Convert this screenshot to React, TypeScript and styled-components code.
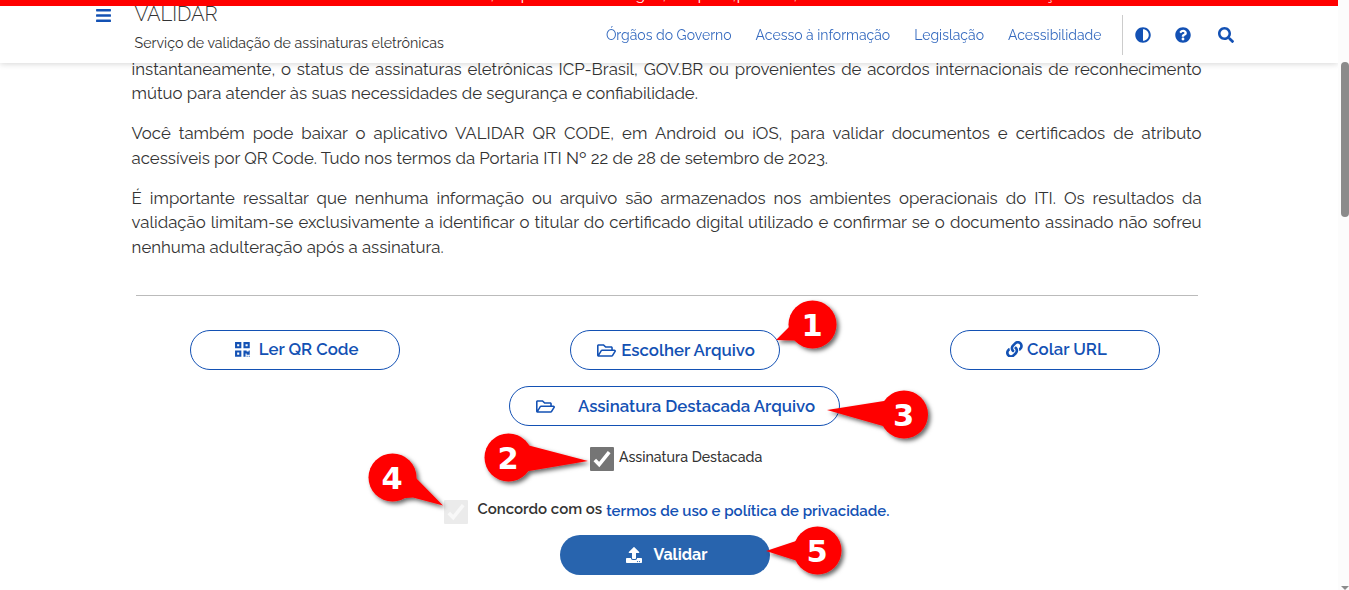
import React from 'react';
import styled, { createGlobalStyle } from 'styled-components';
import {
  FaAdjust,
  FaBars,
  FaLink,
  FaQrcode,
  FaQuestionCircle,
  FaRegFolderOpen,
  FaSearch,
  FaUpload,
} from 'react-icons/fa';

const BLUE = '#1351b4';

const GlobalStyle = createGlobalStyle`
  * { box-sizing: border-box; }
  body {
    margin: 0;
    background: #fff;
    color: #333;
    font-family: Raleway, Lato, sans-serif;
    overflow: hidden;
  }
`;

const Window = styled.div`
  position: relative;
  display: grid;
  grid-template-columns: 1338px 11px;
  width: 1349px;
  height: 590px;
  overflow: hidden;
`;

const Page = styled.div`
  display: flex;
  flex-direction: column;
  height: 590px;
  overflow: hidden;
`;

const Banner = styled.div`
  display: flex;
  height: 6px;
  flex: none;
  overflow: hidden;
  background: #f00;
  color: #fff;
  font-size: 15px;
  line-height: 20px;
  z-index: 2;
`;

const BannerWord = styled.span<{ $slot: number }>`
  width: ${(p) => p.$slot}px;
  flex: none;
  margin-top: -15px;
  text-align: right;
  white-space: nowrap;
`;

const Header = styled.header`
  display: flex;
  flex: none;
  height: 57px;
  padding-left: 94.5px;
  background: #fff;
  box-shadow: 0 1px 6px rgba(0, 0, 0, 0.16);
  z-index: 1;
`;

const MenuIcon = styled.div`
  width: 40px;
  padding-top: 0.5px;
  color: ${BLUE};
  font-size: 17px;
  line-height: 0;
`;

const Brand = styled.div`
  width: 471.4px;
`;

const Title = styled.div`
  margin-top: -6px;
  font-size: 20.16px;
  font-weight: 300;
  line-height: 28px;
`;

const Subtitle = styled.div`
  margin-top: 5px;
  font-size: 14.22px;
  font-weight: 400;
  line-height: 20px;
`;

const Nav = styled.nav`
  display: flex;
  gap: 24px;
  width: 516.1px;
  padding-top: 19px;
  font-size: 14px;
  line-height: 20px;
  white-space: nowrap;
`;

const NavLink = styled.a`
  color: ${BLUE};
  opacity: 0.85;
`;

const Tools = styled.div`
  display: flex;
  align-items: center;
  gap: 24px;
  height: 40px;
  margin-top: 9px;
  padding-left: 12.4px;
  border-left: 1px solid #ccc;
  color: ${BLUE};
  font-size: 16px;

  svg:last-child {
    margin-left: 3px;
  }
`;

const Content = styled.main`
  display: flex;
  flex-direction: column;
  margin: -6px 0 0 131.6px;
  width: 1070px;
`;

const Paragraph = styled.p`
  margin: 0 0 15.72px;
  font-size: 16.8px;
  line-height: 24.36px;
  text-align: justify;
`;

const Line = styled.span`
  display: block;
  white-space: nowrap;
`;

const FullLine = styled(Line)`
  text-align-last: justify;
`;

const Divider = styled.hr`
  width: 1062px;
  height: 1px;
  margin: 20.34px 0 34px 4.4px;
  border: 0;
  background: #bbb;
`;

const ButtonRow = styled.div`
  display: flex;
  justify-content: space-between;
  width: 970px;
  margin-left: 58.4px;
`;

const Button = styled.button<{
  $width?: number;
  $gap: number;
  $solid?: boolean;
  $up?: number;
  $indent?: number;
}>`
  display: flex;
  align-items: center;
  justify-content: center;
  gap: ${(p) => p.$gap}px;
  width: ${(p) => p.$width ?? 210}px;
  height: 40px;
  padding: 0 0 ${(p) => p.$up ?? 0}px ${(p) => p.$indent ?? 0}px;
  border: ${(p) => (p.$solid ? '0' : `1px solid ${BLUE}`)};
  border-radius: 20px;
  background: ${(p) => (p.$solid ? '#2864ae' : '#fff')};
  color: ${(p) => (p.$solid ? '#fff' : BLUE)};
  font-family: inherit;
  font-size: ${(p) => (p.$solid ? 16 : 16.8)}px;
  font-weight: ${(p) => (p.$solid ? 700 : 600)};
  line-height: 20px;
  white-space: nowrap;
`;

const DetachedButton = styled.div`
  margin: 16px 0 0 377.4px;
`;

const CheckRow = styled.div<{ $left: number; $top: number; $gap: number }>`
  display: flex;
  gap: ${(p) => p.$gap}px;
  margin: ${(p) => p.$top}px 0 0 ${(p) => p.$left}px;
  height: 24px;
  white-space: nowrap;
`;

const Box = styled.span<{ $disabled?: boolean }>`
  width: 24px;
  height: 24px;
  flex: none;
  border-radius: 1px;
  background: ${(p) => (p.$disabled ? '#ebebeb' : '#757575')};
  color: ${(p) => (p.$disabled ? '#f8f8f8' : '#fff')};

  svg {
    display: block;
  }
`;

const CheckLabel = styled.span`
  font-size: 14.15px;
  font-weight: 500;
  line-height: 20px;
`;

const Terms = styled.span`
  display: flex;
  gap: 4px;
  font-size: 15px;
  font-weight: 600;
  line-height: 20px;
  margin-top: -1px;
`;

const TermsLink = styled.a`
  margin-top: 2px;
  color: ${BLUE};
`;

const Submit = styled.div`
  margin: 11px 0 0 428.4px;
`;

const ScrollTrack = styled.div`
  display: flex;
  flex-direction: column;
  justify-content: space-between;
  padding: 62px 0 0 3px;
  background: #fcfcfc;
`;

const ScrollThumb = styled.div`
  width: 8px;
  height: 155px;
  border-radius: 4px;
  background: #8b8b8b;
`;

const Callouts = styled.svg`
  position: absolute;
  inset: 0;
  pointer-events: none;
`;

const Digit = styled.text`
  fill: #fff;
  font: bold 30.5px 'DejaVu Sans', sans-serif;
  text-anchor: middle;
`;

const CheckMark = () => (
  <svg width="24" height="24" viewBox="0 0 24 24">
    <path d="M4.8 13l4.4 4.6L19.2 5.2" fill="none" stroke="currentColor" strokeWidth="3.6" />
  </svg>
);

const bannerWords: [string, number][] = [
  ['Caro usuário,', 494],
  ['imp', 36],
  ['ortante: o código', 124],
  [',', 12],
  ['tamp', 41],
  ['o,', 29],
  ['p', 10],
  ['adrão,', 51],
  ['demais casos em verificaç', 257],
];

const callouts = [
  { n: 1, cx: 812.5, cy: 324.5, tip: '776,340 790,326 812,315 812,341 795,340.5' },
  { n: 3, cx: 904, cy: 414.5, tip: '827,410 884,401 904,401 904,428 883,426' },
  { n: 2, cx: 508.5, cy: 457.5, tip: '588,461 529,445.5 508,446 508,471 526,471.5' },
  { n: 4, cx: 392.5, cy: 477.5, tip: '443,505.5 416,478 392,478 392,499 413,497.5' },
  { n: 5, cx: 817.5, cy: 550.5, tip: '766,551 796,541 817,541 817,560 796,560.5' },
];

export default function App() {
  return (
    <>
      <GlobalStyle />
      <Window>
        <Page>
          <Banner>
            {bannerWords.map(([word, slot]) => (
              <BannerWord key={word} $slot={slot}>{word}</BannerWord>
            ))}
          </Banner>
          <Header>
            <MenuIcon><FaBars /></MenuIcon>
            <Brand>
              <Title>VALIDAR</Title>
              <Subtitle>Serviço de validação de assinaturas eletrônicas</Subtitle>
            </Brand>
            <Nav>
              <NavLink>Órgãos do Governo</NavLink>
              <NavLink>Acesso à informação</NavLink>
              <NavLink>Legislação</NavLink>
              <NavLink>Acessibilidade</NavLink>
            </Nav>
            <Tools>
              <FaAdjust />
              <FaQuestionCircle />
              <FaSearch />
            </Tools>
          </Header>
          <Content>
            <Paragraph>
              <FullLine>instantaneamente, o status de assinaturas eletrônicas ICP-Brasil, GOV.BR ou provenientes de acordos internacionais de reconhecimento</FullLine>
              <Line>mútuo para atender às suas necessidades de segurança e confiabilidade.</Line>
            </Paragraph>
            <Paragraph>
              <FullLine>Você também pode baixar o aplicativo VALIDAR QR CODE, em Android ou iOS, para validar documentos e certificados de atributo</FullLine>
              <Line>acessíveis por QR Code. Tudo nos termos da Portaria ITI Nº 22 de 28 de setembro de 2023.</Line>
            </Paragraph>
            <Paragraph>
              <FullLine>É importante ressaltar que nenhuma informação ou arquivo são armazenados nos ambientes operacionais do ITI. Os resultados da</FullLine>
              <FullLine>validação limitam-se exclusivamente a identificar o titular do certificado digital utilizado e confirmar se o documento assinado não sofreu</FullLine>
              <Line>nenhuma adulteração após a assinatura.</Line>
            </Paragraph>
            <Divider />
            <ButtonRow>
              <Button $gap={8} $up={2} $indent={2.5}><FaQrcode />Ler QR Code</Button>
              <Button $gap={5} $indent={2}><FaRegFolderOpen size={19} />Escolher Arquivo</Button>
              <Button $gap={4} $up={2} $indent={3}><FaLink />Colar URL</Button>
            </ButtonRow>
            <DetachedButton>
              <Button $gap={23} $width={331} $indent={2}><FaRegFolderOpen size={19} />Assinatura Destacada Arquivo</Button>
            </DetachedButton>
            <CheckRow $left={458.4} $top={21} $gap={5}>
              <Box><CheckMark /></Box>
              <CheckLabel>Assinatura Destacada</CheckLabel>
            </CheckRow>
            <CheckRow $left={312.4} $top={29} $gap={9.5}>
              <Box $disabled><CheckMark /></Box>
              <Terms>
                <span>Concordo com os</span>
                <TermsLink>termos de uso e política de privacidade.</TermsLink>
              </Terms>
            </CheckRow>
            <Submit>
              <Button $solid $gap={12} $indent={3}><FaUpload />Validar</Button>
            </Submit>
          </Content>
        </Page>
        <ScrollTrack>
          <ScrollThumb />
          <svg width="8" height="4" viewBox="0 0 8 4"><path d="M0 0h8L4 4z" fill="#8b8b8b" /></svg>
        </ScrollTrack>
        <Callouts width="1349" height="590">
          <defs>
            <filter id="shadow" x="-20%" y="-20%" width="150%" height="150%">
              <feDropShadow dx="2.5" dy="2.5" stdDeviation="2" floodColor="#000" floodOpacity="0.6" />
            </filter>
          </defs>
          {callouts.map((c) => (
            <g key={c.n}>
              <g fill="#f00" filter="url(#shadow)">
                <circle cx={c.cx} cy={c.cy} r="24" />
                <polygon points={c.tip} />
              </g>
              <Digit x={c.cx - 0.5} y={c.cy + 11.4}>{c.n}</Digit>
            </g>
          ))}
        </Callouts>
      </Window>
    </>
  );
}
